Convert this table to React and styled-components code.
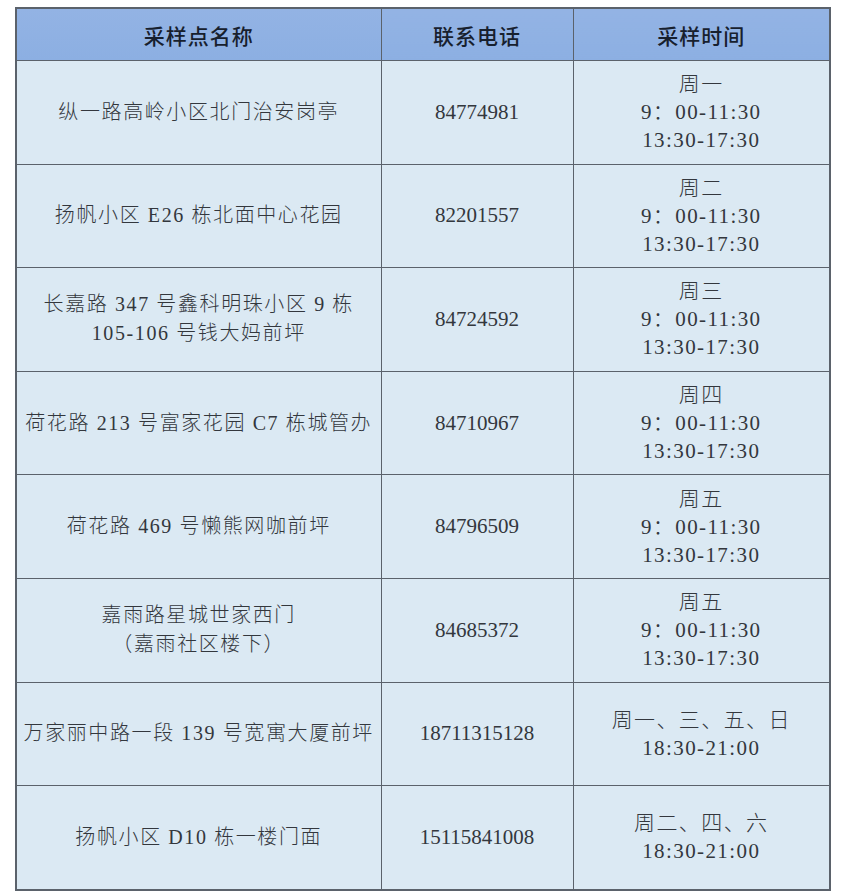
import React from 'react';
import styled, { createGlobalStyle } from 'styled-components';

const GlobalStyle = createGlobalStyle`
    html, body {
        margin: 0;
        padding: 0;
        background: #ffffff;
    }
`;

const Page = styled.div`
    width: 843px;
    height: 892px;
    padding: 7px 0 0 15px;
    box-sizing: border-box;
    background: #ffffff;
`;

const Table = styled.table`
    border-collapse: collapse;
    table-layout: fixed;
    width: 814px;
    border: 2px solid #5b626b;

    col.name { width: 365px; }
    col.phone { width: 192px; }
    col.time { width: 257px; }
`;

const HeadCell = styled.th`
    height: 51px;
    padding: 0;
    background: linear-gradient(180deg, #93b3e4 0%, #8cafe2 100%);
    border: 1.5px solid #5b626b;
    font-family: "Noto Sans CJK SC", "Noto Sans", sans-serif;
    font-size: 21px;
    font-weight: 500;
    letter-spacing: 1px;
    color: #17202e;
    text-align: center;
    vertical-align: middle;
`;

const Cell = styled.td`
    height: 102.6px;
    padding: 0 4px;
    background: #dbe9f3;
    border: 1.5px solid #5b626b;
    font-family: "Liberation Serif", "Noto Sans CJK SC", serif;
    font-weight: 300;
    color: #33373d;
    text-align: center;
    vertical-align: middle;
    font-size: ${(p) => p.$size || 20}px;
    letter-spacing: ${(p) => p.$spacing || 0}px;
    line-height: ${(p) => p.$lh || 29}px;
`;

const Line = styled.div`
    white-space: nowrap;
`;

const rows = [
    { name: ['纵一路高岭小区北门治安岗亭'], phone: '84774981', time: ['周一', '9：00-11:30', '13:30-17:30'] },
    { name: ['扬帆小区 E26 栋北面中心花园'], phone: '82201557', time: ['周二', '9：00-11:30', '13:30-17:30'] },
    { name: ['长嘉路 347 号鑫科明珠小区 9 栋', '105-106 号钱大妈前坪'], phone: '84724592', time: ['周三', '9：00-11:30', '13:30-17:30'] },
    { name: ['荷花路 213 号富家花园 C7 栋城管办'], phone: '84710967', time: ['周四', '9：00-11:30', '13:30-17:30'] },
    { name: ['荷花路 469 号懒熊网咖前坪'], phone: '84796509', time: ['周五', '9：00-11:30', '13:30-17:30'] },
    { name: ['嘉雨路星城世家西门', '（嘉雨社区楼下）'], phone: '84685372', time: ['周五', '9：00-11:30', '13:30-17:30'] },
    { name: ['万家丽中路一段 139 号宽寓大厦前坪'], phone: '18711315128', time: ['周一、三、五、日', '18:30-21:00'] },
    { name: ['扬帆小区 D10 栋一楼门面'], phone: '15115841008', time: ['周二、四、六', '18:30-21:00'] },
];

export default function App() {
    return (
        <>
            <GlobalStyle />
            <Page>
                <Table>
                    <colgroup>
                        <col className="name" />
                        <col className="phone" />
                        <col className="time" />
                    </colgroup>
                    <thead>
                        <tr>
                            <HeadCell>采样点名称</HeadCell>
                            <HeadCell>联系电话</HeadCell>
                            <HeadCell>采样时间</HeadCell>
                        </tr>
                    </thead>
                    <tbody>
                        {rows.map((r, i) => (
                            <tr key={i}>
                                <Cell $size={20} $spacing={1.6}>
                                    {r.name.map((l) => (
                                        <Line key={l}>{l}</Line>
                                    ))}
                                </Cell>
                                <Cell $size={21}>{r.phone}</Cell>
                                <Cell $size={21} $spacing={1.4} $lh={28}>
                                    {r.time.map((l) => (
                                        <Line key={l}>{l}</Line>
                                    ))}
                                </Cell>
                            </tr>
                        ))}
                    </tbody>
                </Table>
            </Page>
        </>
    );
}
